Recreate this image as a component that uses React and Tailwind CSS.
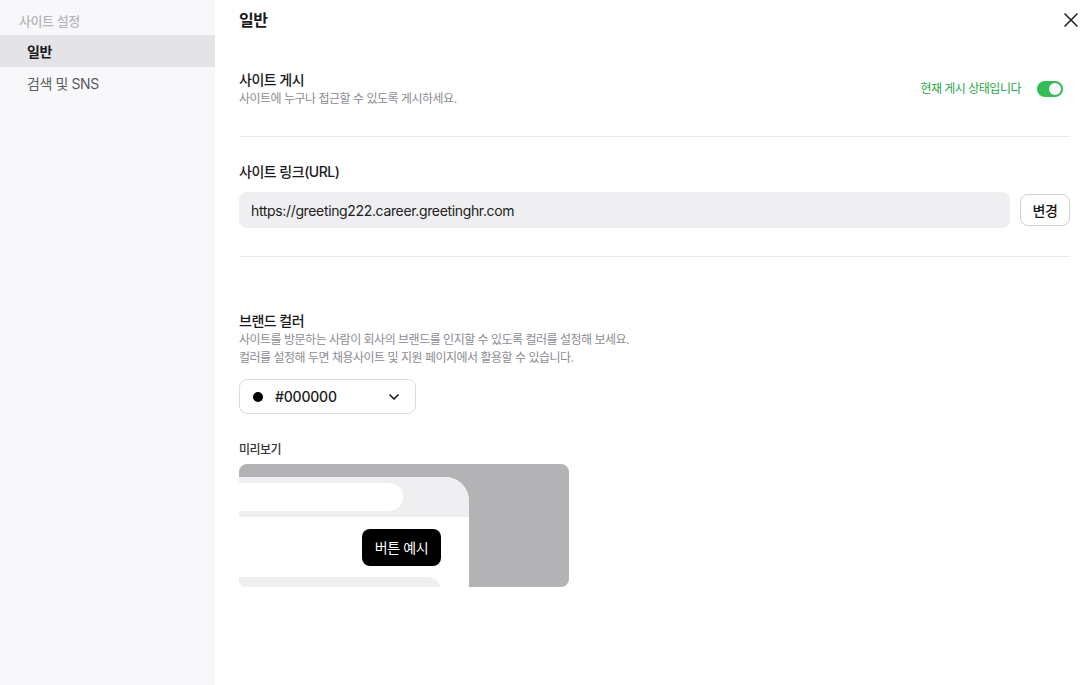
import { X, ChevronDown } from "lucide-react";

const font = {
  fontFamily: '"Inter", "Noto Sans CJK KR", sans-serif',
};

function Sidebar() {
  return (
    <aside className="w-[215px] shrink-0 bg-[#f8f8fa] pt-[12px] tracking-[-0.4px]">
      <div className="px-[19px] text-[13px] leading-[18px] font-medium text-[#b4b4b9]">
        사이트 설정
      </div>
      <div className="mt-[5px] flex h-[32px] items-center bg-[#e4e4e8] px-[27px] text-[14px] font-bold text-[#1a1a1a]">
        일반
      </div>
      <div className="flex h-[32px] items-center px-[27px] text-[14px] text-[#5a5a5f]">
        검색 및 SNS
      </div>
    </aside>
  );
}

function Toggle() {
  return (
    <div className="flex h-[16px] w-[26px] items-center justify-end rounded-full bg-[#2fbf55] px-[2px]">
      <div className="h-[12px] w-[12px] rounded-full bg-white" />
    </div>
  );
}

function Preview() {
  return (
    <div className="h-[123px] w-[330px] overflow-hidden rounded-[8px] bg-[#b3b3b5] pt-[13px]">
      <div className="flex w-[230px] flex-col overflow-hidden rounded-tr-[24px] bg-white">
        <div className="flex h-[40px] shrink-0 items-center bg-[#efeff1]">
          <div className="h-[28px] w-[164px] rounded-r-full bg-white" />
        </div>
        <div className="flex h-[60px] shrink-0 items-center">
          <div className="ml-[123px] flex h-[37px] w-[79px] items-center justify-center rounded-[8px] bg-black text-[14px] tracking-[-0.4px] text-white">
            버튼 예시
          </div>
        </div>
        <div className="h-[20px] w-[202px] shrink-0 rounded-tr-[14px] bg-[#efeff1]" />
      </div>
    </div>
  );
}

export default function App() {
  return (
    <div style={font} className="flex h-[685px] w-[1088px] bg-white text-[#1a1a1a]">
      <Sidebar />
      <main className="flex-1 pl-[24px] pr-[18px] tracking-[-0.5px]">
        <div className="flex h-[40px] items-center justify-between">
          <h1 className="text-[16px] font-bold">일반</h1>
          <X size={24} strokeWidth={1.6} className="mr-[-13px] text-[#222]" />
        </div>

        <section className="flex items-center justify-between pt-[30px] pb-[28px] border-b border-[#ebebed]">
          <div>
            <div className="text-[14px] leading-[20px] font-medium">사이트 게시</div>
            <div className="text-[12px] leading-[18px] text-[#8c8c91]">
              사이트에 누구나 접근할 수 있도록 게시하세요.
            </div>
          </div>
          <div className="flex items-center gap-[16px] pr-[7px]">
            <span className="text-[12px] text-[#22a845]">현재 게시 상태입니다</span>
            <Toggle />
          </div>
        </section>

        <section className="pt-[25px] pb-[28px] border-b border-[#ebebed]">
          <div className="text-[14px] leading-[20px] font-medium">사이트 링크(URL)</div>
          <div className="mt-[10px] flex items-center gap-[10px]">
            <div className="flex h-[36px] flex-1 items-center rounded-[8px] bg-[#efeff1] px-[12px] text-[14px] tracking-[-0.35px] text-[#222]">
              https://greeting222.career.greetinghr.com
            </div>
            <button className="flex h-[32px] w-[50px] items-center justify-center rounded-[8px] border border-[#cfcfd3] bg-white text-[14px] font-medium">
              변경
            </button>
          </div>
        </section>

        <section className="pt-[54px]">
          <div className="text-[14px] leading-[20px] font-medium">브랜드 컬러</div>
          <div className="text-[12px] leading-[18px] text-[#8c8c91]">
            사이트를 방문하는 사람이 회사의 브랜드를 인지할 수 있도록 컬러를 설정해 보세요.
          </div>
          <div className="text-[12px] leading-[18px] text-[#8c8c91]">
            컬러를 설정해 두면 채용사이트 및 지원 페이지에서 활용할 수 있습니다.
          </div>
          <div className="mt-[12px] flex h-[35px] w-[177px] items-center rounded-[8px] border border-[#dcdce0] pl-[13px] pr-[13px]">
            <div className="h-[10px] w-[10px] rounded-full bg-black" />
            <span className="ml-[12px] flex-1 text-[14px] font-medium tracking-[-0.2px]">#000000</span>
            <ChevronDown size={16} strokeWidth={2.5} />
          </div>

          <div className="mt-[27px] text-[12px] leading-[18px] font-medium text-[#333]">미리보기</div>
          <div className="mt-[5px]">
            <Preview />
          </div>
        </section>
      </main>
    </div>
  );
}
